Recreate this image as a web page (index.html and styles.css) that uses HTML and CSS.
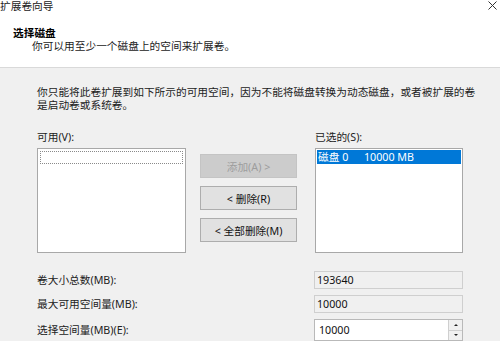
FILE: index.html
```html
<!DOCTYPE html>
<html lang="zh-CN">
<head>
<meta charset="utf-8">
<title>扩展卷向导</title>
<link rel="stylesheet" href="styles.css">
</head>
<body>
<div class="window">
  <div class="header">
    <div class="titlebar">
      <span class="title">扩展卷向导</span>
      <svg class="close" width="9" height="9" viewBox="0 0 9 9"><path d="M0.5 0.5 L8.5 8.5 M8.5 0.5 L0.5 8.5" stroke="#333" stroke-width="1" fill="none"/></svg>
    </div>
    <div class="heading">选择磁盘</div>
    <div class="subtitle">你可以用至少一个磁盘上的空间来扩展卷。</div>
  </div>
  <div class="content">
    <p class="desc">你只能将此卷扩展到如下所示的可用空间，因为不能将磁盘转换为动态磁盘，或者被扩展的卷是启动卷或系统卷。</p>
    <div class="lists">
      <div class="label">可用(V):</div>
      <div></div>
      <div class="label">已选的(S):</div>
      <div class="listbox">
        <div class="item focus"></div>
      </div>
      <div class="buttons">
        <button class="btn disabled">添加(A) &gt;</button>
        <button class="btn">&lt; 删除(R)</button>
        <button class="btn">&lt; 全部删除(M)</button>
      </div>
      <div class="listbox">
        <div class="item selected"><span class="disk">磁盘 0</span><span>10000 MB</span></div>
      </div>
    </div>
    <div class="fields">
      <div class="flabel">卷大小总数(MB):</div>
      <div class="field readonly">193640</div>
      <div class="flabel">最大可用空间量(MB):</div>
      <div class="field readonly">10000</div>
      <div class="flabel">选择空间量(MB)(E):</div>
      <div class="field spin">
        <span class="value">10000</span>
        <span class="spinbtns">
          <span class="sb up"><span class="arrow-up"></span></span>
          <span class="sb down"><span class="arrow-down"></span></span>
        </span>
      </div>
    </div>
  </div>
</div>
</body>
</html>
```

FILE: styles.css
```css
* { box-sizing: border-box; }
html, body {
  margin: 0;
  padding: 0;
}
body {
  width: 500px;
  height: 341px;
  overflow: hidden;
  font-family: "Noto Sans", "Noto Sans CJK SC", sans-serif;
  font-size: 10.7px;
  color: #111;
  background: #f0f0f0;
}
.window {
  width: 500px;
  height: 341px;
  display: flex;
  flex-direction: column;
}
.header {
  background: #fff;
  height: 68px;
  border-bottom: 1px solid #d9d9d9;
  flex: none;
}
.titlebar {
  display: flex;
  justify-content: space-between;
  align-items: flex-start;
  height: 11px;
  padding-top: 1px;
  line-height: 11px;
  padding-right: 3px;
}
.title {
  color: #222;
  padding-left: 0;
}
.close {
  display: block;
  margin-top: 0;
}
.heading {
  margin-top: 16px;
  padding-left: 13px;
  line-height: 13px;
  font-weight: bold;
  color: #000;
}
.subtitle {
  padding-left: 32px;
  line-height: 13px;
  color: #222;
}
.content {
  flex: 1;
  padding-left: 37px;
}
.desc {
  margin: 18px 0 0 0;
  width: 444px;
  line-height: 13px;
  color: #222;
}
.lists {
  margin-top: 19px;
  display: grid;
  grid-template-columns: 163px 115px 148px;
  grid-template-rows: 13px 105px;
  row-gap: 4px;
}
.label {
  line-height: 13px;
  color: #222;
}
.listbox {
  width: 149px;
  height: 105px;
  background: #fff;
  border: 1px solid #a8a8a8;
  padding: 2px;
}
.lists .listbox:last-child {
  width: 148px;
  padding: 1px;
}
.item {
  height: 14px;
  line-height: 14px;
  white-space: nowrap;
}
.item.focus {
  border: 1px dotted #8a8a8a;
  height: 13px;
}
.item.selected {
  background: #0078d7;
  color: #fff;
  padding-left: 1px;
}
.disk {
  display: inline-block;
  width: 46px;
}
.buttons {
  padding-top: 6px;
  display: flex;
  flex-direction: column;
  gap: 8px;
}
.btn {
  width: 97px;
  height: 24px;
  margin: 0;
  padding: 0;
  font: inherit;
  color: #111;
  background: #e1e1e1;
  border: 1px solid #adadad;
}
.btn.disabled {
  background: #cccccc;
  border-color: #c4c4c4;
  color: #9d9d9d;
}
.fields {
  margin-top: 18px;
  display: grid;
  grid-template-columns: 277px 149px;
  grid-auto-rows: 18px;
  row-gap: 6px;
}
.flabel {
  line-height: 18px;
  color: #222;
}
.field {
  height: 18px;
  line-height: 16px;
  border: 1px solid #cfcfcf;
  padding-left: 2px;
  color: #111;
}
.field.readonly {
  background: #f0f0f0;
}
.fields .flabel:nth-last-child(2) {
  line-height: 22px;
}
.field.spin {
  height: 22px;
  background: #fff;
  border-color: #b9b9b9;
  display: flex;
  justify-content: space-between;
  padding-left: 4px;
  line-height: 20px;
}
.spinbtns {
  width: 14px;
  display: flex;
  flex-direction: column;
  border-left: 1px solid #cfcfcf;
}
.sb {
  flex: 1;
  display: flex;
  align-items: center;
  justify-content: center;
  background: #f0f0f0;
}
.sb.up {
  border-bottom: 1px solid #cfcfcf;
}
.arrow-up {
  width: 0;
  height: 0;
  border-left: 2px solid transparent;
  border-right: 2px solid transparent;
  border-bottom: 2px solid #222;
}
.arrow-down {
  width: 0;
  height: 0;
  border-left: 2px solid transparent;
  border-right: 2px solid transparent;
  border-top: 2px solid #222;
}
```
